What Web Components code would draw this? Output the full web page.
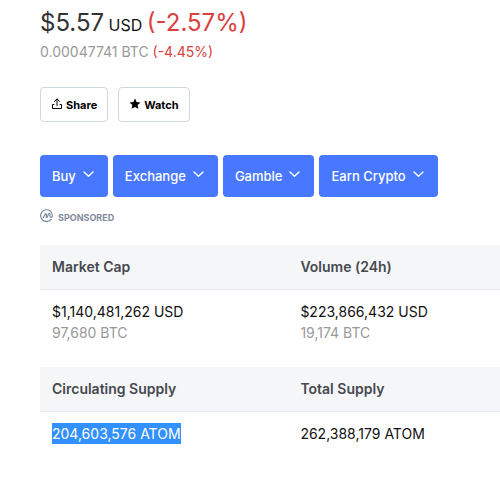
<!DOCTYPE html>
<html lang="en">
<head>
<meta charset="utf-8">
<meta name="viewport" content="width=device-width, initial-scale=1">
<title>ATOM price</title>
<style>
  body { margin: 0; background: #fff; font-family: Inter, "Liberation Sans", sans-serif; font-size: 14px; line-height: 21px; color: #222531; }
</style>
</head>
<body>
<coin-page></coin-page>
<script>
const define = (name, html) => customElements.define(name, class extends HTMLElement {
  constructor() {
    super();
    const t = document.createElement('template');
    t.innerHTML = html;
    this.attachShadow({ mode: 'open' }).append(t.content.cloneNode(true));
  }
});

define('coin-price', `
<style>
  :host { display: block; }
  .usd { font-size: 16px; line-height: 30px; color: #111; }
  .big { font-size: 24px; color: #333; }
  .btc { font-size: 14px; line-height: 20px; margin-top: 2px; color: #999; }
  .change { color: #d94040; }
</style>
<div class="usd"><span class="big">$5.57</span> USD <span class="big change">(-2.57%)</span></div>
<div class="btc">0.00047741 BTC <span class="change">(-4.45%)</span></div>`);

define('outline-button', `
<style>
  :host { display: block; }
  button { display: flex; align-items: center; gap: 3px; height: 35px; padding: 0 10px; border: 1px solid #cfd6e4; border-radius: 4px; background: #fff; color: #000; font: 700 11px/18px Inter, "Liberation Sans", sans-serif; }
  ::slotted(svg) { display: block; width: 12px; height: 12px; margin-bottom: 2px; }
</style>
<button type="button"><slot name="icon"></slot><slot></slot></button>`);

define('menu-button', `
<style>
  :host { display: block; }
  button { display: flex; align-items: center; gap: 6px; height: 42px; padding: 0 12px; border: 0; border-radius: 4px; background: #4878ff; color: #fff; font: 500 13px/21px Inter, "Liberation Sans", sans-serif; white-space: nowrap; }
  svg { display: block; width: 14px; height: 14px; margin-bottom: 4px; }
</style>
<button type="button" aria-haspopup="menu"><slot></slot>
<svg viewBox="0 0 14 14" fill="none" stroke="#fff" stroke-width="1.4" stroke-linecap="round" stroke-linejoin="round" aria-hidden="true"><path d="M2 5 6.500 9.300 11 5"/></svg></button>`);

define('sponsored-label', `
<style>
  :host { display: flex; align-items: center; gap: 5px; color: #808a9d; font-size: 9px; font-weight: 700; line-height: 15px; }
  svg { width: 13px; height: 13px; margin-bottom: 4px; }
</style>
<svg viewBox="0 0 12 12" fill="none" stroke="currentColor" stroke-width="1.100" stroke-linecap="round" stroke-linejoin="round" aria-hidden="true"><path d="M10.200 9.500A5.400 5.400 0 1 1 11.400 6c0 1.200-.4 1.800-1.100 1.800S9.200 7.300 9.200 6.500V5c0-1.100-.8-1.200-1.200-.3L6.500 7.700c-.3.5-.6.3-.6-.2V5c0-.9-.6-1-1-.3L3 8.100"/></svg>
<span><slot></slot></span>`);

define('stat-table', `
<style>
  :host { display: block; }
  table { width: 100%; table-layout: fixed; border-collapse: separate; border-spacing: 0; }
  th, td { padding: 11px 12px 12px; text-align: left; vertical-align: top; font-size: 14px; line-height: 21px; }
  th:first-child { width: 54%; box-sizing: border-box; }
  th { background: #f5f6f8; border-bottom: 1px solid #e4e7eb; color: #46494f; font-weight: 600; }
  td { padding-bottom: 24px; color: #111; }
</style>
<table>
  <thead><tr><th scope="col"><slot name="head-a"></slot></th><th scope="col"><slot name="head-b"></slot></th></tr></thead>
  <tbody><tr><td><slot name="value-a"></slot></td><td><slot name="value-b"></slot></td></tr></tbody>
</table>`);

define('coin-page', `
<style>
  :host { display: block; padding: 8px 0 16px 40px; }
  .row { display: flex; flex-wrap: wrap; }
  .actions { gap: 10px; margin-top: 25px; }
  .menus { gap: 5px; margin-top: 33px; }
  sponsored-label { margin-top: 12px; }
  .first { margin-top: 19px; }
  .sub { display: block; color: #999; }
  mark { display: inline-block; background: #3390ff; color: #fff; }
</style>
<coin-price></coin-price>
<div class="row actions">
  <outline-button><svg slot="icon" viewBox="0 0 12 12" fill="none" stroke="#000" stroke-width="1" stroke-linecap="round" stroke-linejoin="round" aria-hidden="true"><path d="M6 7.500V1M3.500 3.300 6 1l2.500 2.300M3 6.500H1.500v4h9v-4H9"/></svg>Share</outline-button>
  <outline-button><svg slot="icon" viewBox="0 0 12 12" fill="#000" aria-hidden="true"><path d="m6 .5 1.600 3.500 3.900.4-2.900 2.600.8 3.800L6 8.900l-3.400 1.900.8-3.800L.5 4.400 4.400 4z"/></svg>Watch</outline-button>
</div>
<div class="row menus">
  <menu-button>Buy</menu-button>
  <menu-button>Exchange</menu-button>
  <menu-button>Gamble</menu-button>
  <menu-button>Earn Crypto</menu-button>
</div>
<sponsored-label>SPONSORED</sponsored-label>
<stat-table class="first">
  <span slot="head-a">Market Cap</span><span slot="head-b">Volume (24h)</span>
  <span slot="value-a">$1,140,481,262 USD<span class="sub">97,680 BTC</span></span>
  <span slot="value-b">$223,866,432 USD<span class="sub">19,174 BTC</span></span>
</stat-table>
<stat-table>
  <span slot="head-a">Circulating Supply</span><span slot="head-b">Total Supply</span>
  <span slot="value-a"><mark>204,603,576 ATOM</mark></span>
  <span slot="value-b">262,388,179 ATOM</span>
</stat-table>`);
</script>
</body>
</html>
